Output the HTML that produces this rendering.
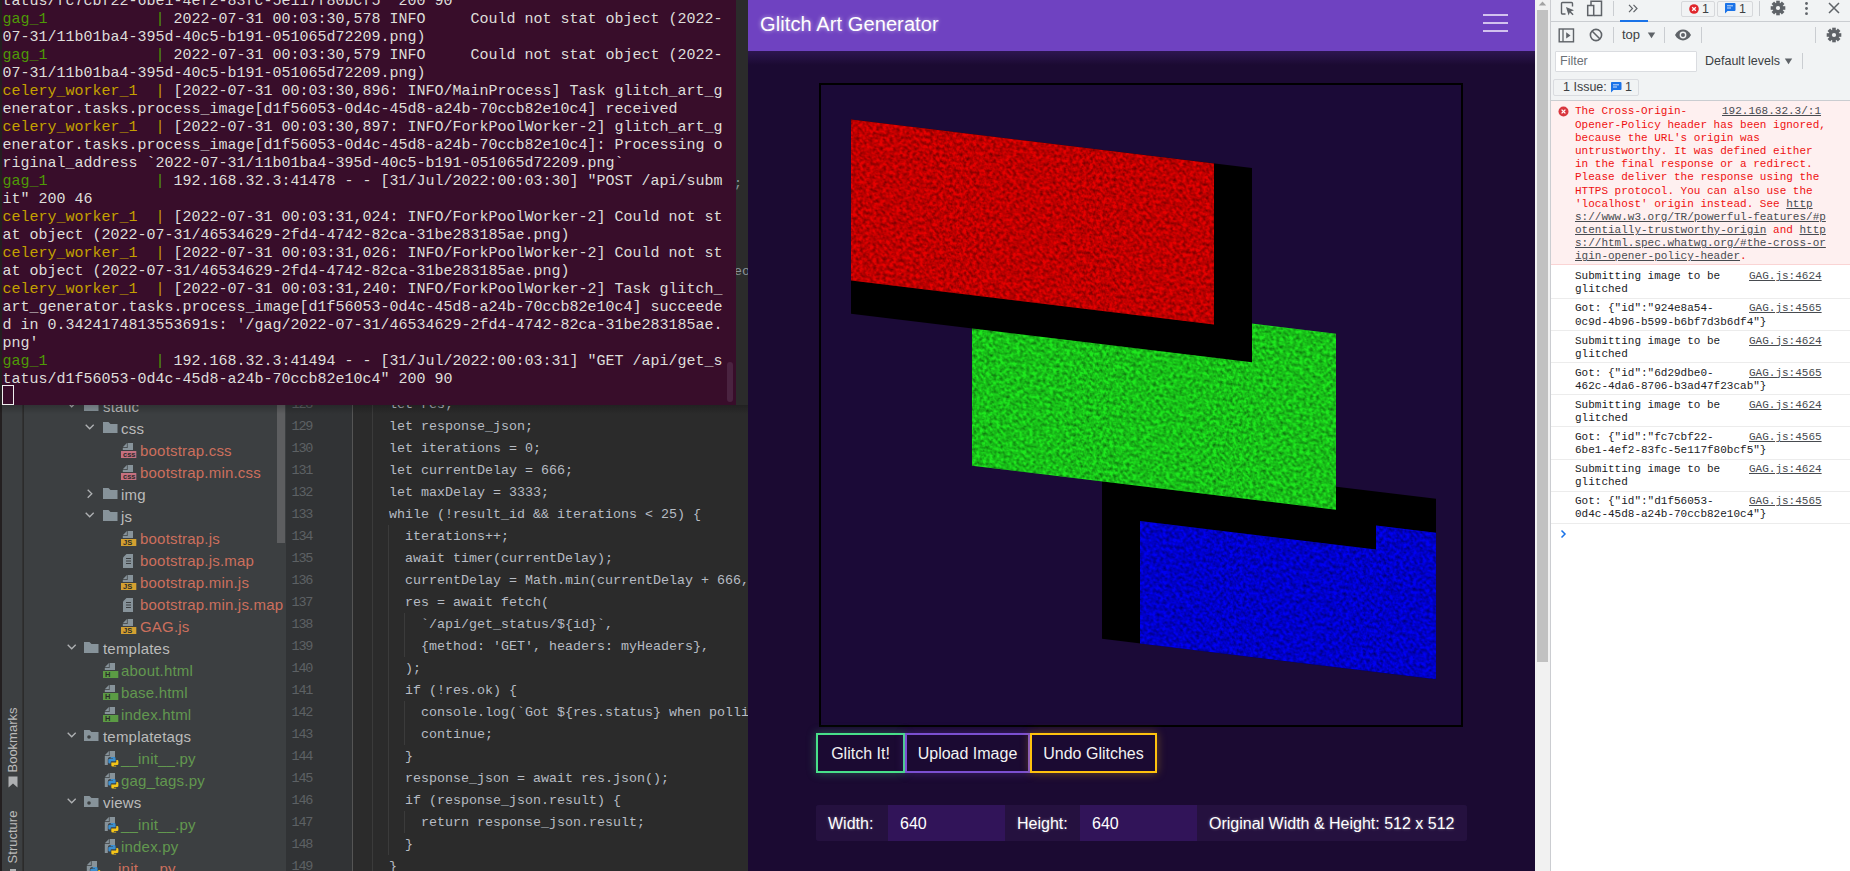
<!DOCTYPE html>
<html><head><meta charset="utf-8">
<style>
*{margin:0;padding:0;box-sizing:border-box}
html,body{width:1850px;height:871px;overflow:hidden;background:#2b2b2b;position:relative}
.abs{position:absolute}
/* ===== IDE ===== */
#ide{left:0;top:0;width:748px;height:871px;background:#2b2b2b;overflow:hidden}
#strip{left:0;top:0;width:2px;height:871px;background:#231f20}
#toolstrip{left:2px;top:405px;width:21px;height:466px;background:#3c3f41;border-right:1px solid #323232}
#tree{left:24px;top:405px;width:262px;height:466px;background:#3c3f41;overflow:hidden}
#gutter{left:286px;top:405px;width:67px;height:466px;background:#313335;border-right:1px solid #555}
#editor{left:353px;top:405px;width:395px;height:466px;background:#2b2b2b;overflow:hidden}
.tn{position:absolute;height:22px;line-height:22px;font-size:15px;white-space:pre;font-family:"Liberation Sans",sans-serif;letter-spacing:0.2px}
.ln{position:absolute;left:0;width:26px;height:22px;line-height:22px;text-align:right;font-family:"Liberation Mono",monospace;font-size:13.5px;letter-spacing:-1.3px;color:#5d6164}
.cl{position:absolute;height:22px;line-height:22px;white-space:pre;font-family:"Liberation Mono",monospace;font-size:13.33px;color:#b7bcc4}
.vt{overflow:visible}
.vt span{position:absolute;left:50%;top:50%;transform:translate(-50%,-50%) rotate(-90deg);font-family:"Liberation Sans",sans-serif;font-size:13px;color:#bbbbbb;white-space:pre;line-height:14px}
/* ===== Terminal ===== */
#term{left:2px;top:0;width:734px;height:405px;background:#380d2a;overflow:hidden;font-family:"Liberation Mono",monospace;font-size:15px;color:#dededa}
#term .l{position:absolute;left:0.5px;height:18px;line-height:18px;white-space:pre}
.g{color:#4e9a06}.y{color:#c4a000}
/* ===== Browser ===== */
#page{left:748px;top:0;width:787px;height:871px;background:#1b0a32;overflow:hidden;font-family:"Liberation Sans",sans-serif}
#nav{left:0;top:0;width:787px;height:51px;background:#6f42c1}
#vscroll{left:1535px;top:0;width:15px;height:871px;background:#f1f1f1}
#brand{left:12px;top:11px;font-size:20px;letter-spacing:0.1px;line-height:26px;color:#fff;text-shadow:0 0 4px rgba(255,255,255,.6)}
.hb{left:735px;width:25px;height:2px;background:#d2c2ee}
#frame{left:71px;top:83px;width:644px;height:644px;border:2px solid #000;background:#1b0a37}
.btn{top:733px;height:40px;border:2px solid;background:#1b0a32;color:#f2f2f2;font-size:16px;line-height:38px;text-align:center}
#ig{left:68px;top:805px;width:651px;height:36px;border-radius:3px;overflow:hidden;background:#25113f}
.igl{top:0;height:36px;line-height:38px;font-size:16px;color:#fff;padding-left:12px;background:#25113f;text-shadow:0 0 3px rgba(255,255,255,.35)}
.igi{top:0;height:36px;line-height:38px;font-size:16px;color:#fff;padding-left:12px;background:#311459}
/* ===== DevTools ===== */
.dt{font-family:"Liberation Sans",sans-serif;white-space:pre}
.badge{top:1px;height:16px;border:1px solid #d6d8db;border-radius:2px}
.cm{font-family:"Liberation Mono",monospace;font-size:11px;line-height:13.2px;white-space:pre}
.cm u{text-decoration-thickness:1px;text-underline-offset:1px;color:#474b50}

#dev{left:1550px;top:0;width:300px;height:871px;background:#fff;border-left:1px solid #cbcdd1;font-family:"Liberation Sans",sans-serif;overflow:hidden}
</style></head><body>
<div id="ide" class="abs">
  <div id="strip" class="abs"></div>
  <div id="toolstrip" class="abs">
<div class="abs vt" style="left:0px;top:304px;width:21px;height:62px"><span>Bookmarks</span></div>
<svg class="abs" style="left:6px;top:371px" width="10" height="12" viewBox="0 0 10 12"><path d="M0.5 0.5H9.5V11.5L5 7.5L0.5 11.5Z" fill="#aeb0b2"/></svg>
<div class="abs vt" style="left:0px;top:405px;width:21px;height:54px"><span>Structure</span></div>
<svg class="abs" style="left:6px;top:463px" width="10" height="6" viewBox="0 0 10 6"><path d="M2 1H8V6H2Z" fill="#aeb0b2"/></svg>
</div>
  <div id="tree" class="abs">
<svg class="abs" style="left:43px;top:-3px" width="10" height="7"><polyline points="0.7,0.7 4.7,4.8 8.7,0.7" fill="none" stroke="#afb1b3" stroke-width="1.3"/></svg>
<svg class="abs" style="left:60px;top:-5px" width="15" height="12"><path d="M0 0H5.5L7.5 2H14.5V11H0Z" fill="#87939a"/></svg>
<div class="tn" style="left:79px;top:-9px;color:#bbbbbb">static</div>
<svg class="abs" style="left:61px;top:19px" width="10" height="7"><polyline points="0.7,0.7 4.7,4.8 8.7,0.7" fill="none" stroke="#afb1b3" stroke-width="1.3"/></svg>
<svg class="abs" style="left:79px;top:17px" width="15" height="12"><path d="M0 0H5.5L7.5 2H14.5V11H0Z" fill="#87939a"/></svg>
<div class="tn" style="left:97px;top:13px;color:#bbbbbb">css</div>
<svg class="abs" style="left:97px;top:38px" width="16" height="16"><path d="M6.6 0H12V7H1.8V4.9H6.6Z" fill="#87939a"/><path d="M1.8 4.2L5.9 0.1V4.2Z" fill="#87939a"/><rect x="0" y="8" width="15.3" height="7" fill="#c6707f"/><text x="2" y="14" font-family="Liberation Sans" font-size="7.5" font-weight="bold" fill="#2b2b2b">css</text></svg>
<div class="tn" style="left:116px;top:35px;color:#cc6f5d">bootstrap.css</div>
<svg class="abs" style="left:97px;top:60px" width="16" height="16"><path d="M6.6 0H12V7H1.8V4.9H6.6Z" fill="#87939a"/><path d="M1.8 4.2L5.9 0.1V4.2Z" fill="#87939a"/><rect x="0" y="8" width="15.3" height="7" fill="#c6707f"/><text x="2" y="14" font-family="Liberation Sans" font-size="7.5" font-weight="bold" fill="#2b2b2b">css</text></svg>
<div class="tn" style="left:116px;top:57px;color:#cc6f5d">bootstrap.min.css</div>
<svg class="abs" style="left:63px;top:84px" width="7" height="11"><polyline points="0.7,0.7 4.8,4.7 0.7,8.7" fill="none" stroke="#afb1b3" stroke-width="1.3"/></svg>
<svg class="abs" style="left:79px;top:83px" width="15" height="12"><path d="M0 0H5.5L7.5 2H14.5V11H0Z" fill="#87939a"/></svg>
<div class="tn" style="left:97px;top:79px;color:#bbbbbb">img</div>
<svg class="abs" style="left:61px;top:107px" width="10" height="7"><polyline points="0.7,0.7 4.7,4.8 8.7,0.7" fill="none" stroke="#afb1b3" stroke-width="1.3"/></svg>
<svg class="abs" style="left:79px;top:105px" width="15" height="12"><path d="M0 0H5.5L7.5 2H14.5V11H0Z" fill="#87939a"/></svg>
<div class="tn" style="left:97px;top:101px;color:#bbbbbb">js</div>
<svg class="abs" style="left:97px;top:126px" width="16" height="16"><path d="M6.6 0H12V7H1.8V4.9H6.6Z" fill="#87939a"/><path d="M1.8 4.2L5.9 0.1V4.2Z" fill="#87939a"/><rect x="0" y="8" width="15.3" height="7" fill="#d3a030"/><text x="2" y="14" font-family="Liberation Sans" font-size="7.5" font-weight="bold" fill="#2b2b2b">JS</text></svg>
<div class="tn" style="left:116px;top:123px;color:#cc6f5d">bootstrap.js</div>
<svg class="abs" style="left:97px;top:148px" width="16" height="16"><path d="M5.5 1H12V15H2V4.5Z" fill="#87939a"/><path d="M5 5.5H10M5 8H10M5 10.5H10" stroke="#3c3f41" stroke-width="1"/></svg>
<div class="tn" style="left:116px;top:145px;color:#cc6f5d">bootstrap.js.map</div>
<svg class="abs" style="left:97px;top:170px" width="16" height="16"><path d="M6.6 0H12V7H1.8V4.9H6.6Z" fill="#87939a"/><path d="M1.8 4.2L5.9 0.1V4.2Z" fill="#87939a"/><rect x="0" y="8" width="15.3" height="7" fill="#d3a030"/><text x="2" y="14" font-family="Liberation Sans" font-size="7.5" font-weight="bold" fill="#2b2b2b">JS</text></svg>
<div class="tn" style="left:116px;top:167px;color:#cc6f5d">bootstrap.min.js</div>
<svg class="abs" style="left:97px;top:192px" width="16" height="16"><path d="M5.5 1H12V15H2V4.5Z" fill="#87939a"/><path d="M5 5.5H10M5 8H10M5 10.5H10" stroke="#3c3f41" stroke-width="1"/></svg>
<div class="tn" style="left:116px;top:189px;color:#cc6f5d">bootstrap.min.js.map</div>
<svg class="abs" style="left:97px;top:214px" width="16" height="16"><path d="M6.6 0H12V7H1.8V4.9H6.6Z" fill="#87939a"/><path d="M1.8 4.2L5.9 0.1V4.2Z" fill="#87939a"/><rect x="0" y="8" width="15.3" height="7" fill="#d3a030"/><text x="2" y="14" font-family="Liberation Sans" font-size="7.5" font-weight="bold" fill="#2b2b2b">JS</text></svg>
<div class="tn" style="left:116px;top:211px;color:#cc6f5d">GAG.js</div>
<svg class="abs" style="left:43px;top:239px" width="10" height="7"><polyline points="0.7,0.7 4.7,4.8 8.7,0.7" fill="none" stroke="#afb1b3" stroke-width="1.3"/></svg>
<svg class="abs" style="left:60px;top:237px" width="15" height="12"><path d="M0 0H5.5L7.5 2H14.5V11H0Z" fill="#87939a"/></svg>
<div class="tn" style="left:79px;top:233px;color:#bbbbbb">templates</div>
<svg class="abs" style="left:79px;top:258px" width="16" height="16"><path d="M6.6 0H12V7H1.8V4.9H6.6Z" fill="#87939a"/><path d="M1.8 4.2L5.9 0.1V4.2Z" fill="#87939a"/><rect x="0" y="8" width="15.3" height="7" fill="#5b9b44"/><text x="2" y="14" font-family="Liberation Sans" font-size="7.5" font-weight="bold" fill="#2b2b2b">H</text></svg>
<div class="tn" style="left:97px;top:255px;color:#62984f">about.html</div>
<svg class="abs" style="left:79px;top:280px" width="16" height="16"><path d="M6.6 0H12V7H1.8V4.9H6.6Z" fill="#87939a"/><path d="M1.8 4.2L5.9 0.1V4.2Z" fill="#87939a"/><rect x="0" y="8" width="15.3" height="7" fill="#5b9b44"/><text x="2" y="14" font-family="Liberation Sans" font-size="7.5" font-weight="bold" fill="#2b2b2b">H</text></svg>
<div class="tn" style="left:97px;top:277px;color:#62984f">base.html</div>
<svg class="abs" style="left:79px;top:302px" width="16" height="16"><path d="M6.6 0H12V7H1.8V4.9H6.6Z" fill="#87939a"/><path d="M1.8 4.2L5.9 0.1V4.2Z" fill="#87939a"/><rect x="0" y="8" width="15.3" height="7" fill="#5b9b44"/><text x="2" y="14" font-family="Liberation Sans" font-size="7.5" font-weight="bold" fill="#2b2b2b">H</text></svg>
<div class="tn" style="left:97px;top:299px;color:#62984f">index.html</div>
<svg class="abs" style="left:43px;top:327px" width="10" height="7"><polyline points="0.7,0.7 4.7,4.8 8.7,0.7" fill="none" stroke="#afb1b3" stroke-width="1.3"/></svg>
<svg class="abs" style="left:60px;top:325px" width="15" height="12"><path d="M0 0H5.5L7.5 2H14.5V11H0Z" fill="#87939a"/><circle cx="5" cy="7" r="1.8" fill="#3c3f41"/></svg>
<div class="tn" style="left:79px;top:321px;color:#bbbbbb">templatetags</div>
<svg class="abs" style="left:79px;top:346px" width="16" height="16"><path d="M6.6 0H12V6H7A2.4 2.4 0 0 0 4.8 8.4V14H1.8V4.9H6.6Z" fill="#87939a"/><path d="M1.8 4.2L5.9 0.1V4.2Z" fill="#87939a"/><path d="M7.6 6H11.2Q12.6 6 12.6 7.4V10.2H8.6Q7.6 10.2 7.6 11.2V12.6H6.6Q5.3 12.6 5.3 11.2V9Q5.3 7.8 6.6 7.8H10V7.2H7.6Z" fill="#3b8fd0"/><path d="M15.4 10.4V12.8Q15.4 14 14.1 14H10.9V14.7H13.2V15.5H9.6Q8.3 15.5 8.3 14.2V11.6H12.1Q13.3 11.6 13.3 10.4V9.1H14.1Q15.4 9.1 15.4 10.4Z" fill="#f5c518"/></svg>
<div class="tn" style="left:97px;top:343px;color:#62984f">__init__.py</div>
<svg class="abs" style="left:79px;top:368px" width="16" height="16"><path d="M6.6 0H12V6H7A2.4 2.4 0 0 0 4.8 8.4V14H1.8V4.9H6.6Z" fill="#87939a"/><path d="M1.8 4.2L5.9 0.1V4.2Z" fill="#87939a"/><path d="M7.6 6H11.2Q12.6 6 12.6 7.4V10.2H8.6Q7.6 10.2 7.6 11.2V12.6H6.6Q5.3 12.6 5.3 11.2V9Q5.3 7.8 6.6 7.8H10V7.2H7.6Z" fill="#3b8fd0"/><path d="M15.4 10.4V12.8Q15.4 14 14.1 14H10.9V14.7H13.2V15.5H9.6Q8.3 15.5 8.3 14.2V11.6H12.1Q13.3 11.6 13.3 10.4V9.1H14.1Q15.4 9.1 15.4 10.4Z" fill="#f5c518"/></svg>
<div class="tn" style="left:97px;top:365px;color:#62984f">gag_tags.py</div>
<svg class="abs" style="left:43px;top:393px" width="10" height="7"><polyline points="0.7,0.7 4.7,4.8 8.7,0.7" fill="none" stroke="#afb1b3" stroke-width="1.3"/></svg>
<svg class="abs" style="left:60px;top:391px" width="15" height="12"><path d="M0 0H5.5L7.5 2H14.5V11H0Z" fill="#87939a"/><circle cx="5" cy="7" r="1.8" fill="#3c3f41"/></svg>
<div class="tn" style="left:79px;top:387px;color:#bbbbbb">views</div>
<svg class="abs" style="left:79px;top:412px" width="16" height="16"><path d="M6.6 0H12V6H7A2.4 2.4 0 0 0 4.8 8.4V14H1.8V4.9H6.6Z" fill="#87939a"/><path d="M1.8 4.2L5.9 0.1V4.2Z" fill="#87939a"/><path d="M7.6 6H11.2Q12.6 6 12.6 7.4V10.2H8.6Q7.6 10.2 7.6 11.2V12.6H6.6Q5.3 12.6 5.3 11.2V9Q5.3 7.8 6.6 7.8H10V7.2H7.6Z" fill="#3b8fd0"/><path d="M15.4 10.4V12.8Q15.4 14 14.1 14H10.9V14.7H13.2V15.5H9.6Q8.3 15.5 8.3 14.2V11.6H12.1Q13.3 11.6 13.3 10.4V9.1H14.1Q15.4 9.1 15.4 10.4Z" fill="#f5c518"/></svg>
<div class="tn" style="left:97px;top:409px;color:#62984f">__init__.py</div>
<svg class="abs" style="left:79px;top:434px" width="16" height="16"><path d="M6.6 0H12V6H7A2.4 2.4 0 0 0 4.8 8.4V14H1.8V4.9H6.6Z" fill="#87939a"/><path d="M1.8 4.2L5.9 0.1V4.2Z" fill="#87939a"/><path d="M7.6 6H11.2Q12.6 6 12.6 7.4V10.2H8.6Q7.6 10.2 7.6 11.2V12.6H6.6Q5.3 12.6 5.3 11.2V9Q5.3 7.8 6.6 7.8H10V7.2H7.6Z" fill="#3b8fd0"/><path d="M15.4 10.4V12.8Q15.4 14 14.1 14H10.9V14.7H13.2V15.5H9.6Q8.3 15.5 8.3 14.2V11.6H12.1Q13.3 11.6 13.3 10.4V9.1H14.1Q15.4 9.1 15.4 10.4Z" fill="#f5c518"/></svg>
<div class="tn" style="left:97px;top:431px;color:#62984f">index.py</div>
<svg class="abs" style="left:61px;top:456px" width="16" height="16"><path d="M6.6 0H12V6H7A2.4 2.4 0 0 0 4.8 8.4V14H1.8V4.9H6.6Z" fill="#87939a"/><path d="M1.8 4.2L5.9 0.1V4.2Z" fill="#87939a"/><path d="M7.6 6H11.2Q12.6 6 12.6 7.4V10.2H8.6Q7.6 10.2 7.6 11.2V12.6H6.6Q5.3 12.6 5.3 11.2V9Q5.3 7.8 6.6 7.8H10V7.2H7.6Z" fill="#3b8fd0"/><path d="M15.4 10.4V12.8Q15.4 14 14.1 14H10.9V14.7H13.2V15.5H9.6Q8.3 15.5 8.3 14.2V11.6H12.1Q13.3 11.6 13.3 10.4V9.1H14.1Q15.4 9.1 15.4 10.4Z" fill="#f5c518"/></svg>
<div class="tn" style="left:77px;top:453px;color:#cc6f5d">__init__.py</div>
<div class="abs" style="left:253px;top:0;width:8px;height:138px;background:#5d5e60"></div>
</div>
  <div id="gutter" class="abs">
<div class="ln" style="top:-11.3px">128</div>
<div class="ln" style="top:10.7px">129</div>
<div class="ln" style="top:32.7px">130</div>
<div class="ln" style="top:54.7px">131</div>
<div class="ln" style="top:76.7px">132</div>
<div class="ln" style="top:98.7px">133</div>
<div class="ln" style="top:120.7px">134</div>
<div class="ln" style="top:142.7px">135</div>
<div class="ln" style="top:164.7px">136</div>
<div class="ln" style="top:186.7px">137</div>
<div class="ln" style="top:208.7px">138</div>
<div class="ln" style="top:230.7px">139</div>
<div class="ln" style="top:252.7px">140</div>
<div class="ln" style="top:274.7px">141</div>
<div class="ln" style="top:296.7px">142</div>
<div class="ln" style="top:318.7px">143</div>
<div class="ln" style="top:340.7px">144</div>
<div class="ln" style="top:362.7px">145</div>
<div class="ln" style="top:384.7px">146</div>
<div class="ln" style="top:406.7px">147</div>
<div class="ln" style="top:428.7px">148</div>
<div class="ln" style="top:450.7px">149</div>
</div>
  <div id="editor" class="abs">
<div class="abs" style="left:19px;top:0.0px;width:1px;height:466.0px;background:#3b3b3b"></div>
<div class="abs" style="left:35px;top:119.7px;width:1px;height:330.0px;background:#3b3b3b"></div>
<div class="abs" style="left:51px;top:207.7px;width:1px;height:44.0px;background:#3b3b3b"></div>
<div class="abs" style="left:51px;top:295.7px;width:1px;height:44.0px;background:#3b3b3b"></div>
<div class="abs" style="left:51px;top:405.7px;width:1px;height:22.0px;background:#3b3b3b"></div>
<div class="cl" style="left:36px;top:-11.5px">let res;</div>
<div class="cl" style="left:36px;top:10.5px">let response_json;</div>
<div class="cl" style="left:36px;top:32.5px">let iterations = 0;</div>
<div class="cl" style="left:36px;top:54.5px">let currentDelay = 666;</div>
<div class="cl" style="left:36px;top:76.5px">let maxDelay = 3333;</div>
<div class="cl" style="left:36px;top:98.5px">while (!result_id &amp;&amp; iterations &lt; 25) {</div>
<div class="cl" style="left:52px;top:120.5px">iterations++;</div>
<div class="cl" style="left:52px;top:142.5px">await timer(currentDelay);</div>
<div class="cl" style="left:52px;top:164.5px">currentDelay = Math.min(currentDelay + 666, maxDelay);</div>
<div class="cl" style="left:52px;top:186.5px">res = await fetch(</div>
<div class="cl" style="left:68px;top:208.5px">`/api/get_status/${id}`,</div>
<div class="cl" style="left:68px;top:230.5px">{method: &#x27;GET&#x27;, headers: myHeaders},</div>
<div class="cl" style="left:52px;top:252.5px">);</div>
<div class="cl" style="left:52px;top:274.5px">if (!res.ok) {</div>
<div class="cl" style="left:68px;top:296.5px">console.log(`Got ${res.status} when polling`);</div>
<div class="cl" style="left:68px;top:318.5px">continue;</div>
<div class="cl" style="left:52px;top:340.5px">}</div>
<div class="cl" style="left:52px;top:362.5px">response_json = await res.json();</div>
<div class="cl" style="left:52px;top:384.5px">if (response_json.result) {</div>
<div class="cl" style="left:68px;top:406.5px">return response_json.result;</div>
<div class="cl" style="left:52px;top:428.5px">}</div>
<div class="cl" style="left:36px;top:450.5px">}</div>
</div>
  <div class="abs" style="left:736px;top:0;width:12px;height:405px;overflow:hidden">
<div class="cl" style="left:-2px;top:172.7px;color:#8c949c">;</div>
<div class="cl" style="left:-2px;top:260.7px;color:#8c949c">eo</div>
</div>
  <div class="abs" style="left:0;top:405px;width:748px;height:9px;background:linear-gradient(rgba(0,0,0,.22),rgba(0,0,0,0));z-index:5"></div>
  <div id="term" class="abs">
<div class="l" style="top:-7px">tatus/fc7cbf22-6be1-4ef2-83fc-5e117f80bcf5&quot; 200 90</div>
<div class="l" style="top:11px"><span class="g">gag_1            |</span> 2022-07-31 00:03:30,578 INFO     Could not stat object (2022-</div>
<div class="l" style="top:29px">07-31/11b01ba4-395d-40c5-b191-051065d72209.png)</div>
<div class="l" style="top:47px"><span class="g">gag_1            |</span> 2022-07-31 00:03:30,579 INFO     Could not stat object (2022-</div>
<div class="l" style="top:65px">07-31/11b01ba4-395d-40c5-b191-051065d72209.png)</div>
<div class="l" style="top:83px"><span class="y">celery_worker_1  |</span> [2022-07-31 00:03:30,896: INFO/MainProcess] Task glitch_art_g</div>
<div class="l" style="top:101px">enerator.tasks.process_image[d1f56053-0d4c-45d8-a24b-70ccb82e10c4] received</div>
<div class="l" style="top:119px"><span class="y">celery_worker_1  |</span> [2022-07-31 00:03:30,897: INFO/ForkPoolWorker-2] glitch_art_g</div>
<div class="l" style="top:137px">enerator.tasks.process_image[d1f56053-0d4c-45d8-a24b-70ccb82e10c4]: Processing o</div>
<div class="l" style="top:155px">riginal_address `2022-07-31/11b01ba4-395d-40c5-b191-051065d72209.png`</div>
<div class="l" style="top:173px"><span class="g">gag_1            |</span> 192.168.32.3:41478 - - [31/Jul/2022:00:03:30] &quot;POST /api/subm</div>
<div class="l" style="top:191px">it&quot; 200 46</div>
<div class="l" style="top:209px"><span class="y">celery_worker_1  |</span> [2022-07-31 00:03:31,024: INFO/ForkPoolWorker-2] Could not st</div>
<div class="l" style="top:227px">at object (2022-07-31/46534629-2fd4-4742-82ca-31be283185ae.png)</div>
<div class="l" style="top:245px"><span class="y">celery_worker_1  |</span> [2022-07-31 00:03:31,026: INFO/ForkPoolWorker-2] Could not st</div>
<div class="l" style="top:263px">at object (2022-07-31/46534629-2fd4-4742-82ca-31be283185ae.png)</div>
<div class="l" style="top:281px"><span class="y">celery_worker_1  |</span> [2022-07-31 00:03:31,240: INFO/ForkPoolWorker-2] Task glitch_</div>
<div class="l" style="top:299px">art_generator.tasks.process_image[d1f56053-0d4c-45d8-a24b-70ccb82e10c4] succeede</div>
<div class="l" style="top:317px">d in 0.3424174813553691s: &#x27;/gag/2022-07-31/46534629-2fd4-4742-82ca-31be283185ae.</div>
<div class="l" style="top:335px">png&#x27;</div>
<div class="l" style="top:353px"><span class="g">gag_1            |</span> 192.168.32.3:41494 - - [31/Jul/2022:00:03:31] &quot;GET /api/get_s</div>
<div class="l" style="top:371px">tatus/d1f56053-0d4c-45d8-a24b-70ccb82e10c4&quot; 200 90</div>
<div class="abs" style="left:0px;top:385px;width:12px;height:20px;border:1px solid #eee"></div>
<div class="abs" style="left:725px;top:362px;width:6px;height:40px;border-radius:3px;background:#4a2340"></div>
</div>
</div>
<div id="page" class="abs">
  <div id="nav" class="abs">
  <div class="abs" id="brand">Glitch Art Generator</div>
  <div class="abs hb" style="top:14px"></div>
  <div class="abs hb" style="top:22px"></div>
  <div class="abs hb" style="top:30px"></div>
</div>
<div class="abs" style="left:0;top:51px;width:787px;height:14px;background:linear-gradient(#2d1650,rgba(27,10,50,0))"></div>
<div class="abs" id="frame">
<svg width="640" height="640" viewBox="821 85 640 640" style="display:block">
  <defs>
    <filter id="dk" x="0" y="0" width="100%" height="100%">
      <feTurbulence type="fractalNoise" baseFrequency="0.3" numOctaves="2" seed="7"/>
      <feColorMatrix type="matrix" values="0 0 0 0 0  0 0 0 0 0  0 0 0 0 0  -0.95 0 0 0 0.65"/>
    </filter>
    <clipPath id="cB"><path d="M1140 486H1376V462H1436V608.5H1140Z"/></clipPath>
    <clipPath id="cG"><rect x="972" y="275" width="364" height="176"/></clipPath>
    <clipPath id="cR"><rect x="851" y="119.5" width="363" height="161"/></clipPath>
  </defs>
  <g transform="matrix(1 0.121 0 1 0 -102.97)">
    <rect x="1102" y="428" width="334" height="180.5" fill="#000"/>
    <path d="M1140 486H1376V462H1436V608.5H1140Z" fill="#0000f2"/>
    <rect x="1140" y="462" width="296" height="147" fill="#000" filter="url(#dk)" clip-path="url(#cB)"/>
    <rect x="972" y="275" width="364" height="176" fill="#1ee81e"/>
    <rect x="972" y="275" width="364" height="176" filter="url(#dk)" clip-path="url(#cG)"/>
    <rect x="851" y="119.5" width="401" height="194.2" fill="#000"/>
    <rect x="851" y="119.5" width="363" height="161" fill="#e60000"/>
    <rect x="851" y="119.5" width="363" height="161" filter="url(#dk)" clip-path="url(#cR)"/>
  </g>
</svg>
</div>
<div class="abs btn" style="left:68px;width:89px;border-color:#48e08a;box-shadow:0 0 9px rgba(72,224,138,.35)">Glitch It!</div>
<div class="abs btn" style="left:157px;width:125px;border-color:#7b4fd1;box-shadow:0 0 9px rgba(123,79,209,.35)">Upload Image</div>
<div class="abs btn" style="left:282px;width:127px;border-color:#ffc20e;box-shadow:0 0 9px rgba(255,194,14,.35)">Undo Glitches</div>
<div class="abs" id="ig">
  <div class="abs igl" style="left:0;width:72px">Width:</div>
  <div class="abs igi" style="left:72px;width:117px">640</div>
  <div class="abs igl" style="left:189px;width:75px">Height:</div>
  <div class="abs igi" style="left:264px;width:117px">640</div>
  <div class="abs igl" style="left:381px;width:270px">Original Width &amp; Height: 512 x 512</div>
</div>

</div>
<div id="vscroll" class="abs">
<svg class="abs" style="left:3px;top:0px" width="9" height="7" viewBox="0 0 9 7"><path d="M0.8 5.5H8.2L4.5 1.5Z" fill="#a3a3a3"/></svg>
<div class="abs" style="left:2px;top:10px;width:11px;height:652px;background:#c1c1c1"></div>
</div>
<div id="dev" class="abs">
<div class="abs" style="left:0;top:0;width:300px;height:100px;background:#f1f3f4"></div>
<div class="abs" style="left:0;top:21px;width:300px;height:1px;background:#cacdd1"></div>
<div class="abs" style="left:0;top:100px;width:300px;height:1px;background:#cacdd1"></div>
<svg class="abs" style="left:9px;top:1px" width="16" height="16" viewBox="0 0 16 16"><path d="M5.5 13H2.5A1 1 0 0 1 1.5 12V2.5A1 1 0 0 1 2.5 1.5H11.5A1 1 0 0 1 12.5 2.5V5.5" fill="none" stroke="#5f6368" stroke-width="1.4"/><path d="M6 6L14 9.2L10.8 10.4L13.6 13.2L12.6 14.2L9.8 11.4L8.6 14.5Z" fill="#5f6368"/></svg>
<svg class="abs" style="left:35px;top:0px" width="18" height="17" viewBox="0 0 18 17"><path d="M5 5V1.2H15.5V15.5H8" fill="none" stroke="#5f6368" stroke-width="1.5"/><rect x="1.7" y="5.5" width="6" height="10" fill="none" stroke="#5f6368" stroke-width="1.5"/></svg>
<div class="abs" style="left:62px;top:1px;width:1px;height:15px;background:#cacdd1"></div>
<svg class="abs" style="left:77px;top:4px" width="12" height="9" viewBox="0 0 12 9"><path d="M1 0.8L4.5 4.5L1 8.2M5.5 0.8L9 4.5L5.5 8.2" fill="none" stroke="#5f6368" stroke-width="1.2"/></svg>
<div class="abs" style="left:69px;top:20px;width:28px;height:2px;background:#1a73e8"></div>
<div class="abs badge" style="left:130px;width:34px"></div>
<svg class="abs" style="left:137.5px;top:3.5px" width="10" height="10" viewBox="0 0 10 10"><circle cx="5" cy="5" r="4.8" fill="#e0262b"/><path d="M3.2 3.2L6.8 6.8M6.8 3.2L3.2 6.8" stroke="#fff" stroke-width="1.3"/></svg>
<div class="abs dt" style="left:151px;top:1px;font-size:12.5px;line-height:16px;color:#3c4043">1</div>
<div class="abs badge" style="left:166px;width:36px"></div>
<svg class="abs" style="left:173px;top:2px" width="12" height="12" viewBox="0 0 12 12"><path d="M1.5 1H10.5A1 1 0 0 1 11.5 2V8A1 1 0 0 1 10.5 9H3.5L1 11.5V2A1 1 0 0 1 1.5 1Z" fill="#1a73e8"/><path d="M3 3.8H9M3 6H7" stroke="#cfe0fa" stroke-width="1"/></svg>
<div class="abs dt" style="left:188px;top:1px;font-size:12.5px;line-height:16px;color:#3c4043">1</div>
<div class="abs" style="left:208px;top:1px;width:1px;height:15px;background:#cacdd1"></div>
<svg class="abs" style="left:219px;top:0px" width="16" height="16" viewBox="-8 -8 16 16"><g fill="#5f6368"><circle r="5.2"/><rect x="-1.8" y="-7.3" width="3.6" height="3.4" transform="rotate(0)"/><rect x="-1.8" y="-7.3" width="3.6" height="3.4" transform="rotate(45)"/><rect x="-1.8" y="-7.3" width="3.6" height="3.4" transform="rotate(90)"/><rect x="-1.8" y="-7.3" width="3.6" height="3.4" transform="rotate(135)"/><rect x="-1.8" y="-7.3" width="3.6" height="3.4" transform="rotate(180)"/><rect x="-1.8" y="-7.3" width="3.6" height="3.4" transform="rotate(225)"/><rect x="-1.8" y="-7.3" width="3.6" height="3.4" transform="rotate(270)"/><rect x="-1.8" y="-7.3" width="3.6" height="3.4" transform="rotate(315)"/></g><circle r="2.1" fill="#f1f3f4"/></svg>
<svg class="abs" style="left:253px;top:1px" width="5" height="15" viewBox="0 0 5 15"><circle cx="2.5" cy="2.5" r="1.4" fill="#5f6368"/><circle cx="2.5" cy="7.5" r="1.4" fill="#5f6368"/><circle cx="2.5" cy="12.7" r="1.4" fill="#5f6368"/></svg>
<svg class="abs" style="left:277px;top:2px" width="12" height="12" viewBox="0 0 12 12"><path d="M1 1L11 11M11 1L1 11" stroke="#5f6368" stroke-width="1.5"/></svg>
<svg class="abs" style="left:7px;top:28px" width="17" height="15" viewBox="0 0 17 15"><rect x="1.2" y="1" width="14.3" height="12.8" fill="none" stroke="#5f6368" stroke-width="1.4"/><path d="M5 1V14" stroke="#5f6368" stroke-width="1.3"/><path d="M8.2 4.2L12.5 7.4L8.2 10.6Z" fill="#5f6368"/></svg>
<svg class="abs" style="left:37.5px;top:28px" width="14" height="14" viewBox="0 0 14 14"><circle cx="7" cy="7" r="5.6" fill="none" stroke="#5f6368" stroke-width="1.6"/><path d="M3 3L11 11" stroke="#5f6368" stroke-width="1.6"/></svg>
<div class="abs" style="left:62px;top:27px;width:1px;height:16px;background:#cacdd1"></div>
<div class="abs dt" style="left:71px;top:27px;font-size:13px;line-height:16px;color:#3c4043">top</div>
<svg class="abs" style="left:96px;top:32px" width="9" height="7" viewBox="0 0 9 7"><path d="M0.8 0.5H8.2L4.5 6.3Z" fill="#5f6368"/></svg>
<div class="abs" style="left:113px;top:27px;width:1px;height:16px;background:#cacdd1"></div>
<svg class="abs" style="left:123px;top:29px" width="18" height="12" viewBox="0 0 18 12"><path d="M1 6C3 2.3 6 0.6 9 0.6S15 2.3 17 6C15 9.7 12 11.4 9 11.4S3 9.7 1 6Z" fill="#5f6368"/><circle cx="9" cy="6" r="3.4" fill="#f1f3f4"/><circle cx="9" cy="6" r="2" fill="#5f6368"/></svg>
<div class="abs" style="left:150px;top:27px;width:1px;height:16px;background:#cacdd1"></div>
<div class="abs" style="left:264px;top:27px;width:1px;height:16px;background:#cacdd1"></div>
<svg class="abs" style="left:275px;top:27px" width="16" height="16" viewBox="-8 -8 16 16"><g fill="#5f6368"><circle r="5.2"/><rect x="-1.8" y="-7.3" width="3.6" height="3.4" transform="rotate(0)"/><rect x="-1.8" y="-7.3" width="3.6" height="3.4" transform="rotate(45)"/><rect x="-1.8" y="-7.3" width="3.6" height="3.4" transform="rotate(90)"/><rect x="-1.8" y="-7.3" width="3.6" height="3.4" transform="rotate(135)"/><rect x="-1.8" y="-7.3" width="3.6" height="3.4" transform="rotate(180)"/><rect x="-1.8" y="-7.3" width="3.6" height="3.4" transform="rotate(225)"/><rect x="-1.8" y="-7.3" width="3.6" height="3.4" transform="rotate(270)"/><rect x="-1.8" y="-7.3" width="3.6" height="3.4" transform="rotate(315)"/></g><circle r="2.1" fill="#f1f3f4"/></svg>
<div class="abs" style="left:4px;top:51px;width:142px;height:21px;background:#fff;border:1px solid #dadce0;border-radius:1px"></div>
<div class="abs dt" style="left:9px;top:53px;font-size:12.5px;line-height:17px;color:#6c7177">Filter</div>
<div class="abs dt" style="left:154px;top:53px;font-size:12.5px;line-height:17px;color:#3c4043">Default levels</div>
<svg class="abs" style="left:233px;top:58px" width="9" height="7" viewBox="0 0 9 7"><path d="M0.8 0.5H8.2L4.5 6.3Z" fill="#5f6368"/></svg>
<div class="abs" style="left:251px;top:53px;width:1px;height:16px;background:#cacdd1"></div>
<div class="abs" style="left:2px;top:79px;width:86px;height:17px;border:1px solid #dadce0;border-radius:2px"></div>
<div class="abs dt" style="left:12px;top:79px;font-size:12.5px;line-height:17px;color:#3c4043">1 Issue:</div>
<svg class="abs" style="left:59px;top:81px" width="12" height="12" viewBox="0 0 12 12"><path d="M1.5 1H10.5A1 1 0 0 1 11.5 2V8A1 1 0 0 1 10.5 9H3.5L1 11.5V2A1 1 0 0 1 1.5 1Z" fill="#1a73e8"/><path d="M3 3.8H9M3 6H7" stroke="#cfe0fa" stroke-width="1"/></svg>
<div class="abs dt" style="left:74px;top:79px;font-size:12.5px;line-height:17px;color:#3c4043">1</div>
<div class="abs" style="left:0;top:101px;width:300px;height:164px;background:#fef0f0;border-bottom:1px solid #fad4d4"></div>
<svg class="abs" style="left:6.5px;top:105.5px" width="11" height="11" viewBox="0 0 11 11"><circle cx="5.5" cy="5.5" r="5" fill="#d9363e"/><path d="M3.6 3.6L7.4 7.4M7.4 3.6L3.6 7.4" stroke="#fff" stroke-width="1.3"/></svg>
<div class="abs cm" style="left:24px;top:105.4px;color:#ee1111">The Cross-Origin-</div>
<div class="abs cm" style="left:24px;top:118.6px;color:#ee1111">Opener-Policy header has been ignored,</div>
<div class="abs cm" style="left:24px;top:131.8px;color:#ee1111">because the URL&#x27;s origin was</div>
<div class="abs cm" style="left:24px;top:144.9px;color:#ee1111">untrustworthy. It was defined either</div>
<div class="abs cm" style="left:24px;top:158.1px;color:#ee1111">in the final response or a redirect.</div>
<div class="abs cm" style="left:24px;top:171.3px;color:#ee1111">Please deliver the response using the</div>
<div class="abs cm" style="left:24px;top:184.5px;color:#ee1111">HTTPS protocol. You can also use the</div>
<div class="abs cm" style="left:24px;top:197.7px;color:#ee1111">'localhost' origin instead. See <u>http</u></div>
<div class="abs cm" style="left:24px;top:210.8px;color:#ee1111"><u>s://www.w3.org/TR/powerful-features/#p</u></div>
<div class="abs cm" style="left:24px;top:224.0px;color:#ee1111"><u>otentially-trustworthy-origin</u> and <u>http</u></div>
<div class="abs cm" style="left:24px;top:237.2px;color:#ee1111"><u>s://html.spec.whatwg.org/#the-cross-or</u></div>
<div class="abs cm" style="left:24px;top:250.4px;color:#ee1111"><u>igin-opener-policy-header</u>.</div>
<div class="abs cm" style="left:171px;top:104.8px;color:#3c4043"><u>192.168.32.3/:1</u></div>
<div class="abs cm" style="left:24px;top:270.3px;color:#202124">Submitting image to be</div>
<div class="abs cm" style="left:24px;top:283.4px;color:#202124">glitched</div>
<div class="abs cm" style="left:198px;top:270.3px;color:#3c4043"><u>GAG.js:4624</u></div>
<div class="abs" style="left:0;top:297.8px;width:300px;height:1px;background:#ececec"></div>
<div class="abs cm" style="left:24px;top:302.4px;color:#202124">Got: {&quot;id&quot;:&quot;924e8a54-</div>
<div class="abs cm" style="left:24px;top:315.6px;color:#202124">0c9d-4b96-b599-b6bf7d3b6df4&quot;}</div>
<div class="abs cm" style="left:198px;top:302.4px;color:#3c4043"><u>GAG.js:4565</u></div>
<div class="abs" style="left:0;top:329.9px;width:300px;height:1px;background:#ececec"></div>
<div class="abs cm" style="left:24px;top:334.5px;color:#202124">Submitting image to be</div>
<div class="abs cm" style="left:24px;top:347.7px;color:#202124">glitched</div>
<div class="abs cm" style="left:198px;top:334.5px;color:#3c4043"><u>GAG.js:4624</u></div>
<div class="abs" style="left:0;top:362.1px;width:300px;height:1px;background:#ececec"></div>
<div class="abs cm" style="left:24px;top:366.7px;color:#202124">Got: {&quot;id&quot;:&quot;6d29dbe0-</div>
<div class="abs cm" style="left:24px;top:379.9px;color:#202124">462c-4da6-8706-b3ad47f23cab&quot;}</div>
<div class="abs cm" style="left:198px;top:366.7px;color:#3c4043"><u>GAG.js:4565</u></div>
<div class="abs" style="left:0;top:394.2px;width:300px;height:1px;background:#ececec"></div>
<div class="abs cm" style="left:24px;top:398.8px;color:#202124">Submitting image to be</div>
<div class="abs cm" style="left:24px;top:412.0px;color:#202124">glitched</div>
<div class="abs cm" style="left:198px;top:398.8px;color:#3c4043"><u>GAG.js:4624</u></div>
<div class="abs" style="left:0;top:426.4px;width:300px;height:1px;background:#ececec"></div>
<div class="abs cm" style="left:24px;top:431.0px;color:#202124">Got: {&quot;id&quot;:&quot;fc7cbf22-</div>
<div class="abs cm" style="left:24px;top:444.1px;color:#202124">6be1-4ef2-83fc-5e117f80bcf5&quot;}</div>
<div class="abs cm" style="left:198px;top:431.0px;color:#3c4043"><u>GAG.js:4565</u></div>
<div class="abs" style="left:0;top:458.5px;width:300px;height:1px;background:#ececec"></div>
<div class="abs cm" style="left:24px;top:463.1px;color:#202124">Submitting image to be</div>
<div class="abs cm" style="left:24px;top:476.3px;color:#202124">glitched</div>
<div class="abs cm" style="left:198px;top:463.1px;color:#3c4043"><u>GAG.js:4624</u></div>
<div class="abs" style="left:0;top:490.6px;width:300px;height:1px;background:#ececec"></div>
<div class="abs cm" style="left:24px;top:495.2px;color:#202124">Got: {&quot;id&quot;:&quot;d1f56053-</div>
<div class="abs cm" style="left:24px;top:508.4px;color:#202124">0d4c-45d8-a24b-70ccb82e10c4&quot;}</div>
<div class="abs cm" style="left:198px;top:495.2px;color:#3c4043"><u>GAG.js:4565</u></div>
<div class="abs" style="left:0;top:522.8px;width:300px;height:1px;background:#ececec"></div>
<svg class="abs" style="left:9px;top:529px" width="8" height="10" viewBox="0 0 8 10"><path d="M1.5 1.5L5 5L1.5 8.5" fill="none" stroke="#1a73e8" stroke-width="1.5"/></svg>
</div>
</body></html>
